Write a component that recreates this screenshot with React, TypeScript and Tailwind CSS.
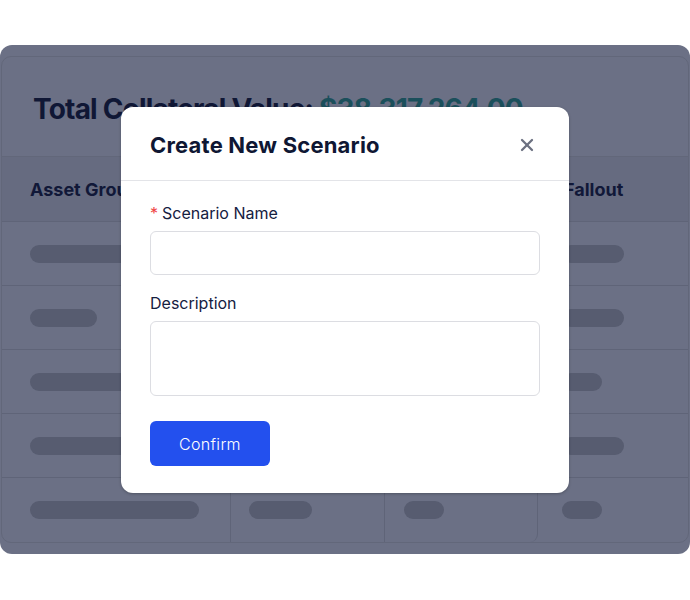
import { X } from "lucide-react";

const font = { fontFamily: "Inter, 'Noto Sans', sans-serif" };

const rows = [
  [210, 0, 0, 62],
  [67, 0, 0, 62],
  [210, 0, 0, 40],
  [210, 0, 0, 62],
  [169, 63, 40, 40],
];

function Bar({ w }: { w: number }) {
  if (!w) return null;
  return <div className="h-[18px] rounded-full bg-[#575c70]" style={{ width: w }} />;
}

export default function App() {
  return (
    <div className="relative w-[690px] h-[600px] bg-white pt-[45px]" style={font}>
      <div className="h-[509px] rounded-[12px] bg-[#6b7085] px-[1px] py-[11px]">
        <div className="h-full rounded-[10px] border border-[#62677a] overflow-hidden flex flex-col">
          <div className="h-[100px] shrink-0 flex items-center pl-[31px] pt-[4px] border-b border-[#62677a]">
            <h1 className="text-[28px] font-bold tracking-[-0.8px] text-[#101735]">
              Total Collateral Value: <span className="text-[#1b4f5b]">$38,317,264.00</span>
            </h1>
          </div>
          <div className="grid grid-cols-[228px_154px_154px_1fr] h-[65px] bg-[#666b80] border-b border-[#5f6478] items-center">
            <div className="pl-[28px] text-[18px] font-bold text-[#111838]">Asset Group</div>
            <div className="pl-[20px] text-[18px] font-bold text-[#111838]">Balance</div>
            <div className="pl-[20px] text-[18px] font-bold text-[#111838]">Scenario</div>
            <div className="pl-[26px] text-[18px] font-bold text-[#111838]">Fallout</div>
          </div>
          {rows.map((r, i) => {
            const last = i === rows.length - 1;
            return (
              <div
                key={i}
                className={
                  last
                    ? "grid grid-cols-[228px_154px_154px_1fr] flex-1"
                    : "grid grid-cols-[228px_154px_154px_1fr] h-[64px] border-b border-[#5f6478]"
                }
              >
                <div className="flex items-center pl-[28px]">
                  <Bar w={r[0]} />
                </div>
                <div className={last ? "flex items-center pl-[18px] border-l border-[#5f6478]" : "flex items-center pl-[18px]"}>
                  <Bar w={r[1]} />
                </div>
                <div
                  className={
                    last
                      ? "flex items-center pl-[19px] border-l border-r border-[#5f6478] rounded-br-[8px]"
                      : "flex items-center pl-[19px]"
                  }
                >
                  <Bar w={r[2]} />
                </div>
                <div className="flex items-center pl-[24px]">
                  <Bar w={r[3]} />
                </div>
              </div>
            );
          })}
        </div>
      </div>

      <div className="absolute left-[121px] top-[107px] w-[448px] h-[386px] rounded-[12px] bg-white shadow-[0_1px_3px_rgba(0,0,0,0.25)] flex flex-col">
        <div className="h-[74px] shrink-0 flex items-center justify-between pl-[29px] pr-[32px] pt-[3px] border-b border-[#e3e4e8]">
          <h2 className="text-[22px] font-bold tracking-[0.2px] text-[#0f1733]">Create New Scenario</h2>
          <X className="w-[20px] h-[20px] text-[#6b7080]" strokeWidth={2.75} />
        </div>
        <div className="px-[29px] pt-[21px] flex flex-col">
          <label className="text-[16px] text-[#15203f] leading-[22px]">
            <span className="text-[#ef4444] mr-[4px]">*</span>Scenario Name
          </label>
          <input className="mt-[7px] h-[44px] w-full rounded-[6px] border border-[#dcdde2] outline-none" />
          <label className="mt-[17px] text-[16px] text-[#15203f] leading-[22px]">Description</label>
          <textarea className="mt-[7px] h-[75px] w-full rounded-[6px] border border-[#dcdde2] outline-none resize-none" />
          <button className="mt-[25px] w-[120px] h-[45px] rounded-[6px] bg-[#2350ee] text-white text-[16px] font-light tracking-[0.3px]">
            Confirm
          </button>
        </div>
      </div>
    </div>
  );
}
